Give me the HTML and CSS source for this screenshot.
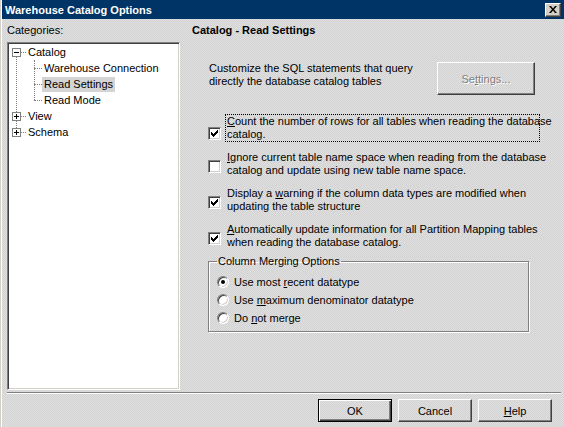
FILE: index.html
```html
<!DOCTYPE html>
<html lang="en">
<head>
    <meta charset="UTF-8">
    <title>Warehouse Catalog Options</title>
    <link rel="stylesheet" href="styles.css">
</head>
<body>
<div class="window">
    <div class="titlebar">
        <span class="title">Warehouse Catalog Options</span>
        <button class="close" title="Close">
            <svg width="8" height="7" viewBox="0 0 8 7"><path d="M0 0h2l2 2.5 2-2.5h2l-3 3.5 3 3.5h-2l-2-2.5-2 2.5h-2l3-3.5z" fill="#000"/></svg>
        </button>
    </div>

    <div class="content">
        <!-- categories -->
        <div class="sidebar">
            <div class="cat-label">Categories:</div>
            <div class="tree">
                <ul class="tree-root">
                    <li>
                        <div class="row top"><span class="box"></span><span class="dash"></span><span class="label">Catalog</span></div>
                        <ul class="children">
                            <li><div class="row sub"><span class="dash"></span><span class="label">Warehouse Connection</span></div></li>
                            <li><div class="row sub"><span class="dash"></span><span class="label selected">Read Settings</span></div></li>
                            <li><div class="row sub"><span class="dash"></span><span class="label">Read Mode</span></div></li>
                        </ul>
                    </li>
                    <li><div class="row top"><span class="box plus"></span><span class="dash"></span><span class="label">View</span></div></li>
                    <li><div class="row top"><span class="box plus"></span><span class="dash"></span><span class="label">Schema</span></div></li>
                </ul>
            </div>
        </div>

        <!-- settings page -->
        <div class="panel">
            <h1 class="panel-title">Catalog - Read Settings</h1>

            <div class="sql-row">
                <p class="sql-text">Customize the SQL statements that query<br>directly the database catalog tables</p>
                <button class="btn settings" disabled>Se<u>t</u>tings...</button>
            </div>

            <div class="options">
                <div class="option first">
                    <span class="check on"><svg width="13" height="13" viewBox="0 0 13 13"><path d="M3 5h1v3h-1zM4 6h1v3h-1zM5 7h1v3h-1zM6 6h1v3h-1zM7 5h1v3h-1zM8 4h1v3h-1zM9 3h1v3h-1z" fill="#000"/></svg></span>
                    <span class="opt-text focus"><u>C</u>ount the number of rows for all tables when reading the database<br>catalog.</span>
                </div>
                <div class="option">
                    <span class="check"></span>
                    <span class="opt-text"><u>I</u>gnore current table name space when reading from the database<br>catalog and update using new table name space.</span>
                </div>
                <div class="option">
                    <span class="check on"><svg width="13" height="13" viewBox="0 0 13 13"><path d="M3 5h1v3h-1zM4 6h1v3h-1zM5 7h1v3h-1zM6 6h1v3h-1zM7 5h1v3h-1zM8 4h1v3h-1zM9 3h1v3h-1z" fill="#000"/></svg></span>
                    <span class="opt-text">Display a <u>w</u>arning if the column data types are modified when<br>updating the table structure</span>
                </div>
                <div class="option">
                    <span class="check on"><svg width="13" height="13" viewBox="0 0 13 13"><path d="M3 5h1v3h-1zM4 6h1v3h-1zM5 7h1v3h-1zM6 6h1v3h-1zM7 5h1v3h-1zM8 4h1v3h-1zM9 3h1v3h-1z" fill="#000"/></svg></span>
                    <span class="opt-text"><u>A</u>utomatically update information for all Partition Mapping tables<br>when reading the database catalog.</span>
                </div>
            </div>

            <fieldset class="merge">
                <legend>Column Merging Options</legend>
                <div class="radio-row"><span class="radio on"></span><span>Use most <u>r</u>ecent datatype</span></div>
                <div class="radio-row"><span class="radio"></span><span>Use <u>m</u>aximum denominator datatype</span></div>
                <div class="radio-row"><span class="radio"></span><span>Do <u>n</u>ot merge</span></div>
            </fieldset>
        </div>
    </div>

    <div class="footer">
        <button class="btn default">OK</button>
        <button class="btn">Cancel</button>
        <button class="btn"><u>H</u>elp</button>
    </div>
</div>
</body>
</html>
```

FILE: styles.css
```css
* {
    box-sizing: border-box;
}

body {
    margin: 0;
    width: 564px;
    height: 427px;
    overflow: hidden;
    font-family: "Liberation Sans", Arial, sans-serif;
    font-size: 11px;
    color: #000;
}

/* dialog frame */
.window {
    height: 427px;
    display: flex;
    flex-direction: column;
    border-left: 1px solid #d4d0c8;
    padding-left: 1px;
    background: #d8d8d8 repeating-conic-gradient(#d2d2d2 0 25%, #e0e0e0 0 50%) 0 0 / 2px 2px;
    box-shadow: inset 1px 0 #fff;
}

.titlebar {
    height: 19px;
    flex: none;
    display: flex;
    align-items: center;
    justify-content: space-between;
    background: #003366;
}

.title {
    padding-left: 3px;
    color: #fff;
    font-weight: bold;
    font-size: 11px;
}

.close {
    width: 16px;
    height: 14px;
    margin-right: 3px;
    padding: 0;
    display: flex;
    align-items: center;
    justify-content: center;
    background: #d4d0c8;
    border: 1px solid;
    border-color: #fff #404040 #404040 #fff;
    box-shadow: inset -1px -1px #808080;
}

/* main area */
.content {
    height: 373px;
    flex: none;
    display: flex;
    gap: 12px;
    padding: 5px 0 0 5px;
}

.sidebar {
    width: 173px;
    flex: none;
}

.cat-label {
    line-height: 13px;
    margin-bottom: 5px;
}

.tree {
    height: 348px;
    padding: 1px;
    background: #fff;
    border: 1px solid;
    border-color: #808080 #fff #fff #808080;
    box-shadow: inset 1px 1px #404040, inset -1px -1px #d4d0c8;
}

.tree ul {
    list-style: none;
    margin: 0;
    padding: 0;
    position: relative;
}

/* dotted connector lines */
.tree-root::before {
    content: "";
    position: absolute;
    left: 7px;
    top: 8px;
    height: 80px;
    border-left: 1px dotted #808080;
}

.children::before {
    content: "";
    position: absolute;
    left: 25px;
    top: 0;
    height: 40px;
    border-left: 1px dotted #808080;
}

.row {
    height: 16px;
    display: flex;
    align-items: center;
    position: relative;
}

.row.top {
    padding-left: 3px;
}

.row.sub {
    padding-left: 25px;
}

.dash {
    height: 0;
    border-top: 1px dotted #808080;
}

.row.top .dash {
    width: 5px;
}

.row.sub .dash {
    width: 8px;
}

.box {
    width: 9px;
    height: 9px;
    border: 1px solid #808080;
    background: linear-gradient(#000, #000) center / 5px 1px no-repeat, #fff;
    position: relative;
    z-index: 1;
}

.box.plus {
    background: linear-gradient(#000, #000) center / 5px 1px no-repeat,
                linear-gradient(#000, #000) center / 1px 5px no-repeat, #fff;
}

.label {
    padding: 0 2px;
    line-height: 15px;
    white-space: nowrap;
}

.label.selected {
    background: #d4d4d4;
}

/* right page */
.panel {
    flex: 1;
}

.panel-title {
    margin: 0;
    font-size: 11px;
    font-weight: bold;
    line-height: 13px;
}

.sql-row {
    display: flex;
    margin-top: 25px;
    padding-left: 17px;
}

.sql-text {
    width: 228px;
    margin: 0;
    line-height: 13px;
}

.btn {
    width: 74px;
    height: 23px;
    padding: 0;
    font-family: inherit;
    font-size: 11px;
    color: #000;
    background: #d8d8d8 repeating-conic-gradient(#d2d2d2 0 25%, #e0e0e0 0 50%) 0 0 / 2px 2px;
    border: 1px solid;
    border-color: #fff #404040 #404040 #fff;
    box-shadow: inset -1px -1px #808080;
}

.btn.settings {
    width: 98px;
    height: 33px;
    color: #808080;
    text-shadow: 1px 1px #fff;
}

.btn.default {
    border: 1px solid #000;
    box-shadow: inset 1px 1px #fff, inset -1px -1px #404040, inset -2px -2px #808080;
}

.options {
    margin-top: 19px;
    padding-left: 16px;
    display: flex;
    flex-direction: column;
    gap: 8px;
}

.option {
    display: flex;
    align-items: flex-start;
    gap: 4px;
    height: 28px;
}

.check {
    width: 13px;
    height: 13px;
    flex: none;
    margin-top: 10px;
    background: #fff;
    border: 1px solid;
    border-color: #808080 #fff #fff #808080;
    box-shadow: inset 1px 1px #404040, inset -1px -1px #d4d0c8;
    position: relative;
}

.check svg {
    position: absolute;
    left: -1px;
    top: -1px;
}

.option.first .check {
    margin-top: 13px;
}

.opt-text {
    border: 1px dotted transparent;
    padding: 0 1px;
    line-height: 13px;
    white-space: nowrap;
}

.opt-text.focus {
    border-color: #000;
    width: 315px;
}

/* column merging group */
.merge {
    width: 321px;
    margin: 5px 0 0 16px;
    padding: 5px 8px 4px 8px;
    border: 1px solid #808080;
    box-shadow: inset 1px 1px #fff, 1px 1px #fff;
}

.merge legend {
    padding: 0 1px;
    line-height: 13px;
}

.radio-row {
    height: 18px;
    display: flex;
    align-items: center;
    gap: 5px;
}

.radio {
    width: 12px;
    height: 12px;
    flex: none;
    border-radius: 50%;
    background: #fff;
    border: 1px solid;
    border-color: #808080 #fff #fff #808080;
    box-shadow: inset 1px 1px #404040, inset -1px -1px #d4d0c8;
    display: flex;
    align-items: center;
    justify-content: center;
}

.radio.on::after {
    content: "";
    width: 4px;
    height: 4px;
    border-radius: 50%;
    background: #000;
}

/* bottom buttons */
.footer {
    margin: 0 3px 0 5px;
    padding: 6px 9px 0 0;
    display: flex;
    justify-content: flex-end;
    gap: 6px;
    border-top: 1px solid #808080;
    box-shadow: inset 0 1px #fff;
}
```
